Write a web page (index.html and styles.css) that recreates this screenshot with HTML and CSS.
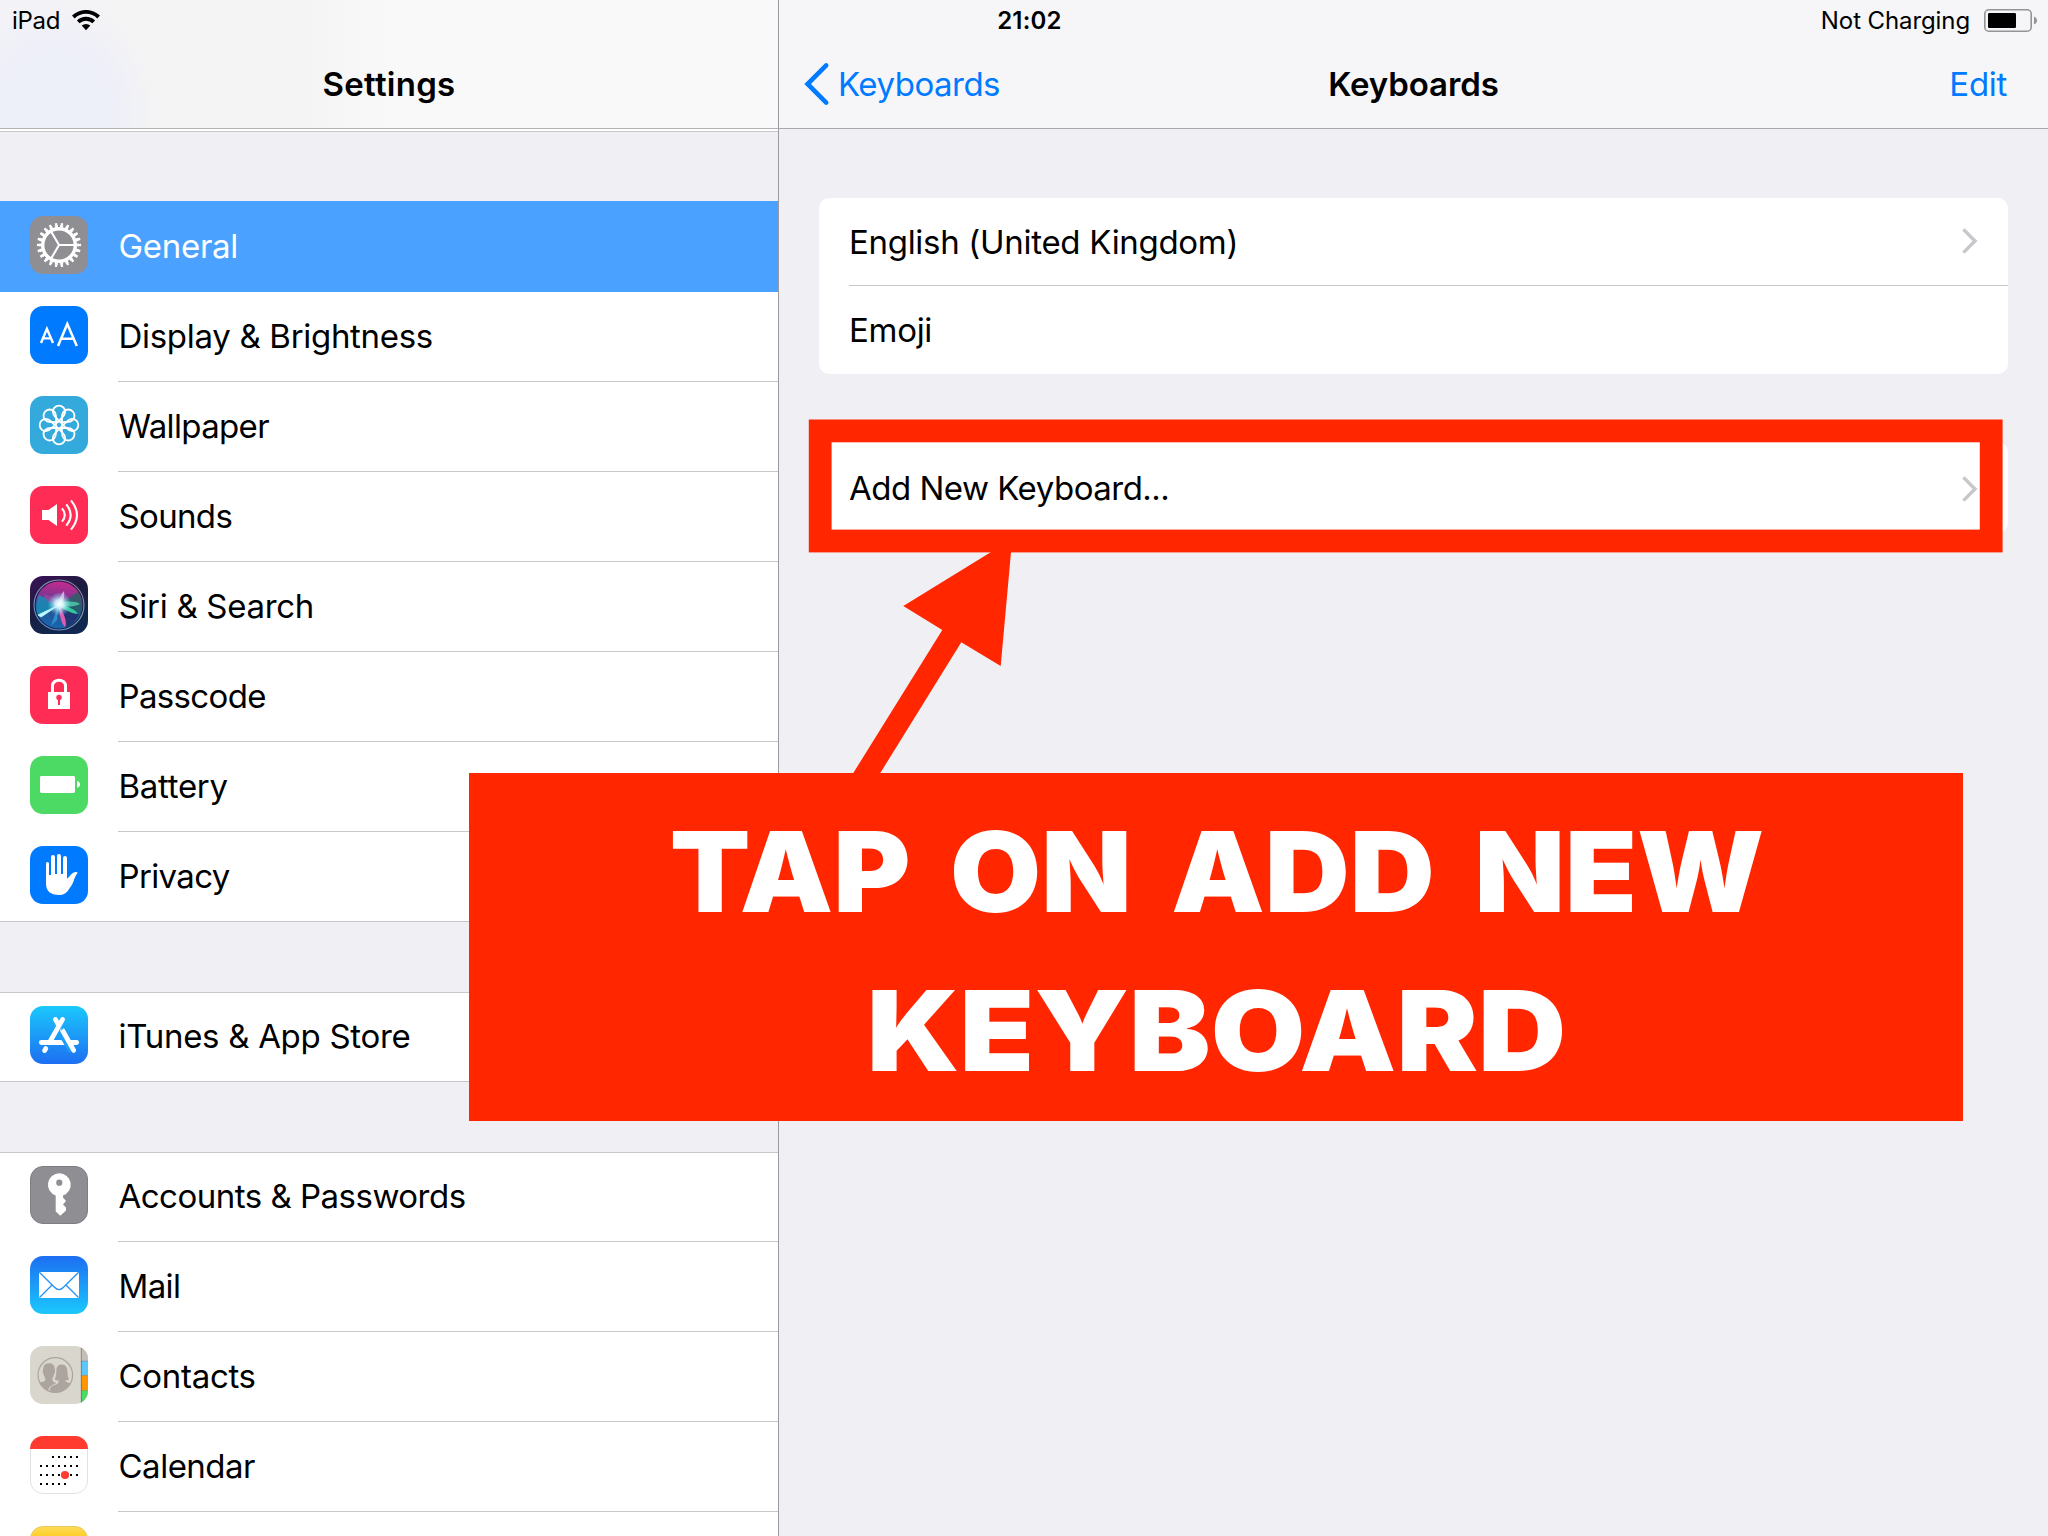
FILE: index.html
```html
<!DOCTYPE html>
<html lang="en">
<head>
<meta charset="utf-8">
<title>Settings – Keyboards</title>
<link rel="stylesheet" href="styles.css">
</head>
<body>
<div class="screen">
  <div class="statusbar">
    <div class="status-left">
      <span>iPad</span>
      <svg class="wifi" width="28" height="21" viewBox="0 0 28 21"><path d="M14 20.2 L9.7 15.6 A6.3 6.3 0 0 1 18.3 15.6 Z"/><path d="M4.9 10.4 A13.3 13.3 0 0 1 23.1 10.4 L20.4 13.2 A9.3 9.3 0 0 0 7.6 13.2 Z"/><path d="M0 5.6 A20.2 20.2 0 0 1 28 5.6 L25.3 8.4 A16.3 16.3 0 0 0 2.7 8.4 Z"/></svg>
    </div>
    <div class="status-time">21:02</div>
    <div class="status-right">
      <span>Not Charging</span>
      <svg class="battery" width="54" height="24" viewBox="0 0 54 24"><rect x="0.8" y="0.8" width="46.4" height="21.4" rx="4" fill="none" stroke="#949496" stroke-width="1.6"/><rect x="4" y="4" width="28" height="15" rx="1.2"/><path d="M50 7.5 C51.8 8.2 53 9.6 53 11.5 C53 13.4 51.8 14.8 50 15.5 Z" fill="#949496"/></svg>
    </div>
  </div>

  <aside class="sidebar">
    <header class="navbar sidebar-nav"><h1 class="title">Settings</h1></header>
    <ul class="group first">
      <li class="item selected">
        <svg class="icon" viewBox="0 0 58 58"><rect width="58" height="58" rx="13" fill="#8e8e93"/><g fill="none" stroke="#fff"><circle cx="29" cy="29" r="16.3" stroke-width="3.4"/><circle cx="29" cy="29" r="18.8" stroke-width="2.4" pathLength="220" stroke-dasharray="5.6 4.4" stroke-dashoffset="2.8"/><circle cx="29" cy="29" r="20.8" stroke-width="2.6" pathLength="220" stroke-dasharray="4 6" stroke-dashoffset="2"/><path d="M29 29 H45 M29 29 L21 15.2 M29 29 L21 42.8" stroke-width="2.1"/></g></svg>
        <span class="label">General</span>
      </li>
      <li class="item">
        <svg class="icon" viewBox="0 0 58 58"><rect width="58" height="58" rx="13" fill="#007aff"/><g fill="none" stroke="#fff"><path d="M11 37 L16.9 22.8 L23 37 M13 32.4 H21" stroke-width="2.4"/><path d="M28 40 L37.3 17.9 L46.8 40 M31 32.8 H43.7" stroke-width="2.5"/></g></svg>
        <span class="label">Display &amp; Brightness</span>
      </li>
      <li class="item">
        <svg class="icon" viewBox="0 0 58 58"><defs><path id="petal" d="M29 25.4 C27 21.5 22.8 20.5 22.8 15.8 A6.2 6.1 0 0 1 35.2 15.8 C35.2 20.5 31 21.5 29 25.4 Z"/></defs><rect width="58" height="58" rx="13" fill="#34aadc"/><g fill="none" stroke="#fff" stroke-width="1.8"><circle cx="29" cy="29" r="3.3"/><use href="#petal"/><use href="#petal" transform="rotate(45 29 29)"/><use href="#petal" transform="rotate(90 29 29)"/><use href="#petal" transform="rotate(135 29 29)"/><use href="#petal" transform="rotate(180 29 29)"/><use href="#petal" transform="rotate(225 29 29)"/><use href="#petal" transform="rotate(270 29 29)"/><use href="#petal" transform="rotate(315 29 29)"/></g></svg>
        <span class="label tight">Wallpaper</span>
      </li>
      <li class="item">
        <svg class="icon" viewBox="0 0 58 58"><rect width="58" height="58" rx="13" fill="#ff2d55"/><path d="M12 24 H18.5 L27 18 V40 L18.5 34 H12 Z" fill="#fff"/><g fill="none" stroke="#fff" stroke-width="2.1"><path d="M32 22.4 Q37.6 29 32 35.6"/><path d="M36.3 18.4 Q45 29 36.3 39.6"/><path d="M41 14.4 Q53 29 41 43.6"/></g></svg>
        <span class="label tight">Sounds</span>
      </li>
      <li class="item">
        <svg class="icon" viewBox="0 0 58 58"><defs><linearGradient id="sbg" x1="0" y1="0" x2=".5" y2="1"><stop offset="0" stop-color="#3c1058"/><stop offset=".5" stop-color="#1b1d3f"/><stop offset="1" stop-color="#10284f"/></linearGradient><linearGradient id="orb" x1=".55" y1="0" x2=".4" y2="1"><stop offset="0" stop-color="#c42b8e"/><stop offset=".35" stop-color="#7e3391"/><stop offset=".55" stop-color="#27508f"/><stop offset="1" stop-color="#1667b0"/></linearGradient><radialGradient id="glow"><stop offset="0" stop-color="#fff"/><stop offset=".35" stop-color="#d9fbff" stop-opacity=".9"/><stop offset="1" stop-color="#6fd6f5" stop-opacity="0"/></radialGradient><linearGradient id="ring" x1="0" y1="1" x2="1" y2="0"><stop offset="0" stop-color="#5a83d8"/><stop offset=".6" stop-color="#8a9fb0"/><stop offset="1" stop-color="#93709d"/></linearGradient></defs><rect width="58" height="58" rx="13" fill="url(#sbg)"/><circle cx="29" cy="29" r="23.5" fill="url(#orb)"/><path d="M30 28 L9 19 C6 26 5 33 8 39 Z" fill="#1599bd" opacity=".7"/><path d="M30 28 L48 16 C53 22 53 30 50 37 Z" fill="#1d655f" opacity=".75"/><path d="M30 28 L49 38 C46 46 40 50 36 51 Z" fill="#222a68" opacity=".8"/><path d="M30 28 C20 28 14 23 14 18 C20 20 27 22 30 28 Z" fill="#95499f" opacity=".8"/><path d="M29 29 L8 39 L11 41 Z" fill="#c8fbff" stroke="#a6f5fb"/><path d="M30 27 C37 25 46 25 50 28 C45 31 37 31 30 29 Z" fill="#46b9a0"/><path d="M31 28 C39 31 46 34 48 38 C42 38 35 34 30 30 Z" fill="#32c99a"/><path d="M29 29 C33 36 38 46 35 51 C31 48 30 38 28 30 Z" fill="#e45bae"/><path d="M28 29 C29 23 31 18 34 15 C35 21 33 26 31 30 Z" fill="#f09ad5"/><path d="M29 27 L21 50 L27 44 Z" fill="#3f9fe0" opacity=".7"/><circle cx="29.5" cy="28" r="12" fill="url(#glow)"/><circle cx="29" cy="29" r="25" fill="none" stroke="url(#ring)" stroke-width="1.1"/></svg>
        <span class="label">Siri &amp; Search</span>
      </li>
      <li class="item">
        <svg class="icon" viewBox="0 0 58 58"><rect width="58" height="58" rx="13" fill="#ff2d55"/><path d="M22.5 27 V19.5 A6.5 5.3 0 0 1 35.5 19.5 V27" fill="none" stroke="#fff" stroke-width="3"/><rect x="18" y="26" width="22" height="17" fill="#fff"/><circle cx="29" cy="31.5" r="2.7" fill="#ff2d55"/><path d="M28 32 H30 V39 H28 Z" fill="#ff2d55"/></svg>
        <span class="label tight">Passcode</span>
      </li>
      <li class="item">
        <svg class="icon" viewBox="0 0 58 58"><rect width="58" height="58" rx="13" fill="#4cd964"/><rect x="10" y="20" width="35" height="17" rx="1.4" fill="#fff"/><path d="M47 25 C49 25.6 50 26.8 50 28.4 C50 30 49 31.2 47 31.8 Z" fill="#fff"/></svg>
        <span class="label">Battery</span>
      </li>
      <li class="item">
        <svg class="icon" viewBox="0 0 58 58"><rect width="58" height="58" rx="13" fill="#007aff"/><path d="M16 17.5 A1.5 1.6 0 0 1 19 17.5 V29 H21 V11 A2 2 0 0 1 25 11 V28 H27 V10 A2 2 0 0 1 31 10 V28 H33 V12 A2 2 0 0 1 37 12 V32.7 C39.5 31.5 41 27 44.5 26.3 C46 26 47.3 26 47.6 26.8 C46 29 44.8 31.5 43.8 34.5 C42.5 38.5 40.5 41 38.4 44 C36 47.5 33.5 49 29 49 C20.5 49 16.2 45 16 38 Z" fill="#fff"/></svg>
        <span class="label tight">Privacy</span>
      </li>
    </ul>
    <ul class="group">
      <li class="item">
        <svg class="icon" viewBox="0 0 58 58"><defs><linearGradient id="store" x1="0" y1="0" x2="0" y2="1"><stop offset="0" stop-color="#1bc8fc"/><stop offset="1" stop-color="#1d6ff2"/></linearGradient></defs><rect width="58" height="58" rx="13" fill="url(#store)"/><g fill="none" stroke="#fff" stroke-width="4.8" stroke-linecap="round"><path d="M11.4 36.5 H46.6"/><path d="M25.4 13.4 L28 18"/><path d="M14.6 44.6 L15.8 42.5"/></g><path d="M27.6 22.5 L41 45.6" stroke="#1c9df8" stroke-width="4.6"/><g fill="none" stroke="#fff" stroke-width="4.8"><path d="M32.6 13.4 L19.8 36" stroke-linecap="round"/><path d="M32.6 24.5 L43.7 44.4" stroke-linecap="round"/></g><path d="M31 25 L34.4 21.5 L32 20 Z" fill="#1cacf9"/></svg>
        <span class="label">iTunes &amp; App Store</span>
      </li>
    </ul>
    <ul class="group">
      <li class="item">
        <svg class="icon" viewBox="0 0 58 58"><rect x=".5" y=".5" width="57" height="57" rx="12.5" fill="#8e8e93" stroke="#7d7d82"/><path fill="#fff" fill-rule="evenodd" d="M29.3 7.2 A11.4 11.4 0 0 1 33 29.4 V31.5 L36 35 L33 38.4 L36 41.5 V44.5 L30.3 49.8 L25.7 45.6 V29.4 A11.4 11.4 0 0 1 29.3 7.2 Z M29.3 13.6 A3.1 3.1 0 1 0 29.3 19.8 A3.1 3.1 0 1 0 29.3 13.6 Z"/></svg>
        <span class="label snug">Accounts &amp; Passwords</span>
      </li>
      <li class="item">
        <svg class="icon" viewBox="0 0 58 58"><defs><linearGradient id="mail" x1="0" y1="0" x2="0" y2="1"><stop offset="0" stop-color="#1d6ff2"/><stop offset="1" stop-color="#1bc8fc"/></linearGradient></defs><rect width="58" height="58" rx="13" fill="url(#mail)"/><rect x="9" y="16" width="40" height="26" fill="#fff"/><path d="M9.3 16.3 L24.5 31.3 Q29 36 33.5 31.3 L48.7 16.3 M9.5 41.5 L21.8 29.2 M48.5 41.5 L36.2 29.2" fill="none" stroke="#2492f6" stroke-width="1.3"/></svg>
        <span class="label tight">Mail</span>
      </li>
      <li class="item">
        <svg class="icon" viewBox="0 0 58 58"><defs><clipPath id="rr"><rect width="58" height="58" rx="13"/></clipPath><clipPath id="cc"><circle cx="25.3" cy="29" r="17.3"/></clipPath></defs><g clip-path="url(#rr)"><rect width="58" height="58" fill="#d9d6ce"/><rect x="51" width="7" height="15" fill="#c5bfb7"/><rect x="51" y="15" width="7" height="14.5" fill="#5ac8fa"/><rect x="51" y="29.5" width="7" height="15" fill="#ff9500"/><rect x="51" y="44.5" width="7" height="14" fill="#4cd964"/><path d="M51.3 0 V58" stroke="#000" stroke-opacity=".3" stroke-width="1"/><path d="M51 15 H58 M51 29.5 H58 M51 44.5 H58" stroke="#000" stroke-opacity=".15"/></g><circle cx="25.3" cy="29" r="17.3" fill="none" stroke="#aca59f" stroke-width="1.2"/><g fill="#aca59f" clip-path="url(#cc)"><path d="M19 17.3 C22.5 17.3 24.8 19.3 24.8 23 C25.3 25 25 27 24 28.5 C23.5 30.8 22.5 32 22.3 34 C23 36.3 25.5 36.5 26.5 37.3 C21.5 39.5 18.6 41 18.3 45 L14 44 L7 36.8 C10 36 15 36.5 15.5 33.5 C15.2 31.8 14 30.5 13.6 28.3 C12.5 26 12.8 24 13.2 22 C13.6 18.8 16 17.3 19 17.3 Z"/><path d="M31.5 18.6 C36 18.6 37.4 22 37.5 26 C37.6 30 38 32 39.3 33 C37.5 34.5 36.3 34.5 35.3 34.5 C35.8 36.5 38.5 36.5 43 38 L34 48 L19.5 47 C19.3 41 22 39.8 26 38.5 C28.5 37.5 29 36 28.8 34.5 C27 34.5 25.5 34 24.7 33.2 C26 31 26.2 28.5 26.3 25.5 C26.3 21 28 18.6 31.5 18.6 Z"/></g></svg>
        <span class="label">Contacts</span>
      </li>
      <li class="item">
        <svg class="icon" viewBox="0 0 58 58"><rect x=".5" y=".5" width="57" height="57" rx="12.5" fill="#fff" stroke="#e2e2e4"/><path d="M0 13 A13 13 0 0 1 13 0 H45 A13 13 0 0 1 58 13 Z" fill="#ff3b30"/><g stroke="#000" stroke-width="2" stroke-dasharray="2 4"><path d="M22 21 H48.5"/><path d="M10 30 H48.5"/><path d="M10 39 H48.5"/><path d="M10 48 H37"/></g><circle cx="35" cy="39" r="4.1" fill="#ff3b30"/></svg>
        <span class="label snug">Calendar</span>
      </li>
      <li class="item">
        <svg class="icon" viewBox="0 0 58 58"><defs><linearGradient id="notes" x1="0" y1="0" x2="0" y2="1"><stop offset="0" stop-color="#ffdb57"/><stop offset=".25" stop-color="#fbc916"/><stop offset="1" stop-color="#fbc916"/></linearGradient></defs><rect x=".5" y=".5" width="57" height="57" rx="12.5" fill="url(#notes)" stroke="#e8c75c"/></svg>
      </li>
    </ul>
  </aside>

  <main class="detail">
    <header class="navbar detail-nav">
      <a class="back"><svg class="back-arrow" width="27" height="44" viewBox="0 0 27 44"><path d="M22.2 3.4 L3.6 22 L22.2 40.6" fill="none" stroke="#007aff" stroke-width="4.6" stroke-linecap="round"/></svg>Keyboards</a>
      <h2 class="title">Keyboards</h2>
      <a class="edit">Edit</a>
    </header>
    <section class="card">
      <div class="row"><span>English (United Kingdom)</span><svg class="chevron" width="16" height="26" viewBox="0 0 16 26"><path d="M1.4 1.4 L13 13 L1.4 24.6"/></svg></div>
      <div class="row"><span>Emoji</span></div>
    </section>
    <section class="card add-card">
      <div class="row"><span class="snug">Add New Keyboard...</span><svg class="chevron" width="16" height="26" viewBox="0 0 16 26"><path d="M1.4 1.4 L13 13 L1.4 24.6"/></svg></div>
    </section>
  </main>

  <svg class="highlight" width="1240" height="380" viewBox="800 410 1240 380"><rect x="820.2" y="430.9" width="1171" height="110.1" fill="none" stroke="#ff2600" stroke-width="22.8"/><path d="M1012.2 539 L903.3 606 L942.3 630 L853.3 773 V776 H880.3 V773 L961.3 642.3 L1000.7 666 Z" fill="#ff2600"/></svg>
  <div class="callout">
    <div class="callout-line wide">TAP ON ADD NEW</div>
    <div class="callout-line wider">KEYBOARD</div>
  </div>
</div>
</body>
</html>
```
FILE: styles.css
```css
*, *::before, *::after { box-sizing: border-box; }
body { margin: 0; }
h1, h2, ul { margin: 0; padding: 0; list-style: none; }

.screen {
  position: relative;
  display: flex;
  width: 2048px;
  height: 1536px;
  overflow: hidden;
  background: #efeff4;
  color: #000;
  font-family: Inter, "Liberation Sans", sans-serif;
  font-size: 33px;
  letter-spacing: -0.3px;
}

.statusbar {
  position: absolute;
  inset: 0 0 auto 0;
  z-index: 2;
  display: grid;
  grid-template-columns: 1fr auto 1fr;
  height: 41px;
  padding: 0 10px 0 12px;
  font-size: 24px;
  line-height: 41px;
  letter-spacing: -0.1px;
}
.status-left, .status-right { display: flex; align-items: flex-start; }
.status-left { letter-spacing: -0.3px; }
.status-right { justify-content: flex-end; }
.wifi { margin: 10px 0 0 12px; }
.status-time { padding-left: 9px; font-weight: 600; letter-spacing: 0.2px; }
.battery { margin: 9px 0 0 14px; }

.sidebar {
  width: 779px;
  height: 1536px;
  flex: none;
  overflow: hidden;
  background: #efeff4;
  border-right: 1px solid #9a9a9f;
}
.navbar {
  height: 129px;
  padding-top: 40px;
  border-bottom: 1px solid #a8a8ac;
  line-height: 88px;
}
.title { font-size: 33px; font-weight: 600; letter-spacing: 0; text-align: center; }
.sidebar-nav {
  background:
    radial-gradient(ellipse 100px 110px at 55px 110px, #edf0f8 35%, #eeeff8 60%, rgba(240, 240, 248, 0)),
    linear-gradient(90deg, #f3f3f7, #f4f4f5 140px, #f4f4f4 300px, #f9f9f9 390px);
  border-color: #b2b2b2;
}
.sidebar-nav .title { letter-spacing: 0.25px; }

.group { margin-top: 70px; border-top: 1px solid #c8c7cc; background: #fff; }
.group.first { margin-top: 2px; border-top: 0; box-shadow: 0 -2px #fff; }
.group.first::before {
  content: "";
  display: block;
  height: 70px;
  background: #efeff4;
  border-top: 1px solid #c8c7cc;
}
.item {
  position: relative;
  display: flex;
  height: 90px;
  padding: 14px 0 0 30px;
}
.group:not(.first) .item:first-child { height: 89px; padding-top: 13px; }
.item::after {
  content: "";
  position: absolute;
  right: 0;
  bottom: 0;
  left: 118px;
  height: 1px;
  background: #c8c7cc;
}
.item:last-child::after { left: 0; }
.item.selected { height: 91px; padding-top: 15px; background: #4aa1ff; color: #fff; }
.item.selected::after { display: none; }
.icon { width: 58px; height: 58px; flex: none; }
.label { margin: -14px 0 0 30.5px; line-height: 88px; }
.snug { letter-spacing: -0.5px; }
.tight { letter-spacing: -0.65px; }

.detail { flex: 1; }
.detail-nav {
  display: grid;
  grid-template-columns: 1fr auto 1fr;
  padding-right: 41px;
  padding-left: 25px;
  background: #f6f6f8;
}
.back, .edit { color: #007aff; }
.back { display: flex; letter-spacing: -0.5px; }
.back-arrow { margin: 22px 7px 0 0; }
.edit { text-align: right; }
.detail-nav .title { padding-left: 16px; letter-spacing: -0.1px; }

.card {
  margin: 69px 40px 0;
  padding-left: 30px;
  border-radius: 10px;
  background: #fff;
}
.row {
  display: flex;
  justify-content: space-between;
  height: 88px;
  padding-right: 30px;
  line-height: 88px;
}
.row + .row { box-shadow: 0 -1px #c8c7cc; }
.chevron { margin-top: 30px; fill: none; stroke: #c7c7cc; stroke-width: 3.4; }
.add-card { margin-top: 68px; padding-top: 2px; padding-bottom: 1px; }
.add-card .chevron { margin-top: 32px; }

.highlight { position: absolute; left: 800px; top: 410px; }
.callout {
  position: absolute;
  left: 469px;
  top: 773px;
  width: 1494px;
  height: 348px;
  padding-top: 19px;
  background: #ff2600;
  color: #fff;
  font-size: 111px;
  font-weight: 900;
  line-height: 159px;
  letter-spacing: 0;
  text-align: center;
}
.callout-line { white-space: nowrap; }
.wide { padding-left: 2px; transform: scaleX(1.06); word-spacing: 15.2px; }
.wider { padding-left: 1px; transform: scaleX(1.1); }
```
